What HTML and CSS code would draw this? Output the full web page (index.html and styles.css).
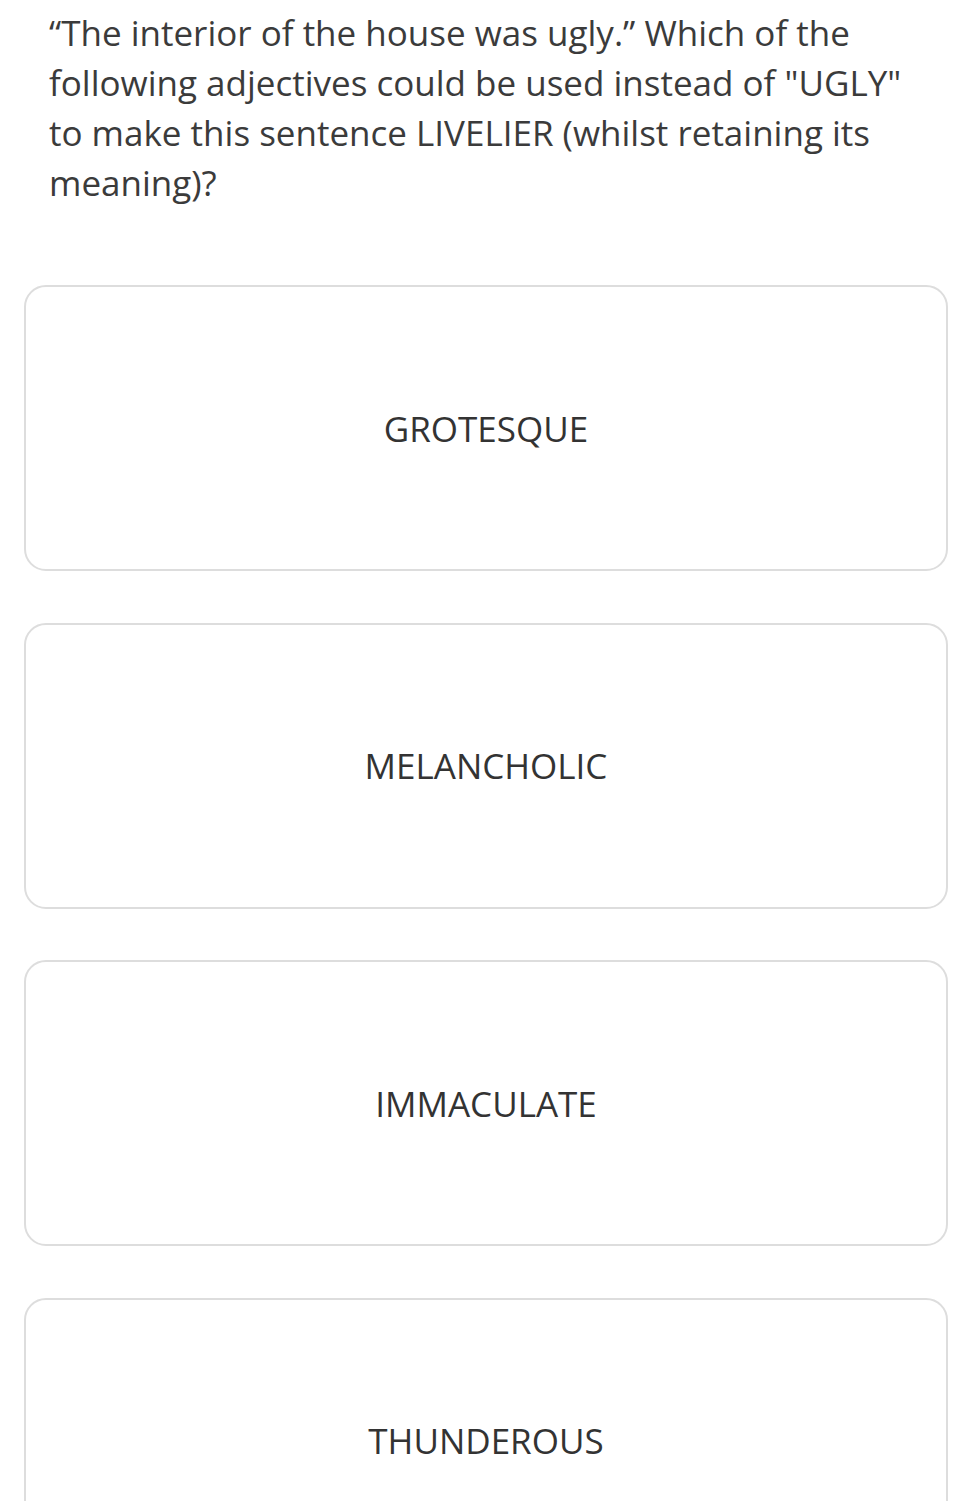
FILE: index.html
```html
<!DOCTYPE html>
<html lang="en">
<head>
  <meta charset="UTF-8" />
  <meta name="viewport" content="width=device-width, initial-scale=1.0" />
  <title>Question</title>
  <link rel="stylesheet" href="styles.css">
</head>
<body>
  <div class="quiz">
    <p class="question">“The interior of the house was ugly.” Which of the following adjectives could be used instead of "UGLY" to make this sentence LIVELIER (whilst retaining its meaning)?</p>

    <div class="answers">
      <button class="answer">GROTESQUE</button>
      <button class="answer">MELANCHOLIC</button>
      <button class="answer">IMMACULATE</button>
      <button class="answer">THUNDEROUS</button>
    </div>
  </div>
</body>
</html>
```

FILE: styles.css
```css
:root {
  --text: #3b3b3b;
  --border: #dddddd;
  --card-bg: #ffffff;
}

body {
  margin: 0;
  background-color: #fff;
  font-family: "Open Sans", Arial, sans-serif;
  color: var(--text);
}

.quiz {
  padding: 0 23px 0 24px;
}

.question {
  margin: 8px 0 0;
  padding: 0 40px 0 25px;
  font-size: 35px;
  line-height: 50px;
}

.answers {
  display: flex;
  flex-direction: column;
  gap: 51.5px;
  margin-top: 77px;
}

.answer {
  display: flex;
  align-items: center;
  justify-content: center;
  height: 286px;
  padding: 0;
  border: 2px solid var(--border);
  border-radius: 22px;
  background-color: var(--card-bg);
  font-family: inherit;
  font-size: 35px;
  color: #333;
  cursor: pointer;
}
```
